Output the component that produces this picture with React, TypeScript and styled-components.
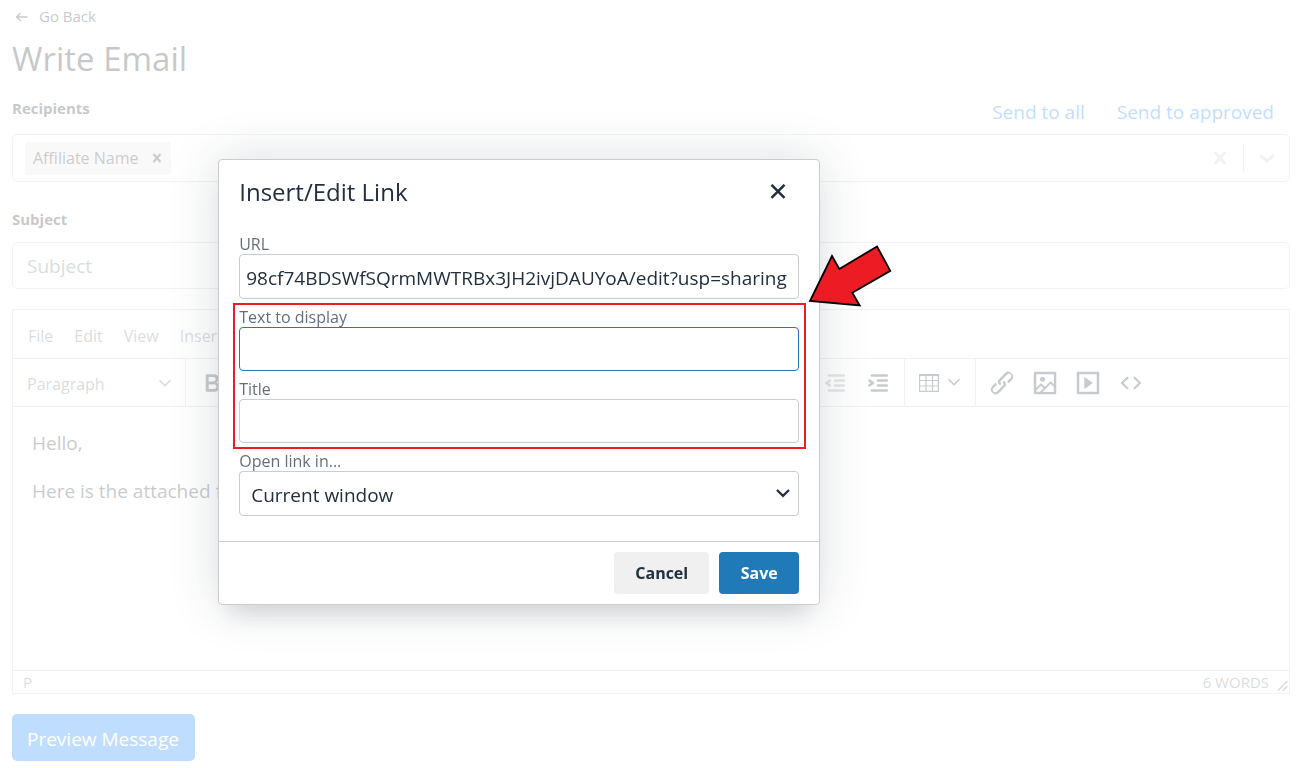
import React from "react";
import styled, { createGlobalStyle } from "styled-components";

const ink = "#222f3e";
const muted = "rgba(34, 47, 62, 0.7)";
const line = "#cccccc";
const blue = "#007bff";

const GlobalStyle = createGlobalStyle`
  *, *::before, *::after { box-sizing: border-box; }
  body {
    margin: 0;
    background: #fff;
    color: #212529;
    font-family: "Open Sans", "Noto Sans", sans-serif;
    font-size: 19px;
    line-height: 24px;
  }
  button, input, select { font: inherit; color: inherit; margin: 0; }
  button { cursor: pointer; }
`;

const Page = styled.main`
  display: flex;
  flex-direction: column;
  align-items: stretch;
  padding: 4px 8px 8px 12px;
`;

const BackLink = styled.a`
  display: flex;
  align-items: center;
  align-self: flex-start;
  gap: 10px;
  padding-left: 2px;
  color: #212529;
  font-size: 15px;
  text-decoration: none;
`;

const PageTitle = styled.h1`
  margin: 8px 0 0;
  font-size: 33px;
  line-height: 46px;
  font-weight: 400;
`;

const FieldHead = styled.div`
  display: flex;
  align-items: center;
  justify-content: space-between;
  height: 52px;
`;

const FieldLabel = styled.label`
  font-size: 15px;
  line-height: 24px;
  font-weight: 700;
`;

const SendActions = styled.div`
  display: flex;
  gap: 32px;
  padding: 8px 16px 0 0;
`;

const TextButton = styled.button`
  padding: 0;
  border: 0;
  background: none;
  color: ${blue};
`;

const Picker = styled.div`
  display: flex;
  align-items: center;
  height: 48px;
  padding-left: 12px;
  border: 1px solid ${line};
  border-radius: 5px;
`;

const Tag = styled.span`
  display: flex;
  align-items: center;
  gap: 12px;
  height: 33px;
  padding: 0 7px 0 8px;
  border-radius: 3px;
  background: #e6e6e6;
  color: #333;
  font-size: 16px;
`;

const PickerTools = styled.div`
  display: flex;
  align-items: center;
  margin-left: auto;
  color: #ccc;
`;

const PlainButton = styled.button<{ $w: number }>`
  display: flex;
  align-items: center;
  justify-content: center;
  width: ${(p) => p.$w}px;
  padding: 0;
  border: 0;
  background: none;
  color: inherit;
`;

const Rule = styled.span`
  width: 1px;
  height: 27px;
  background: ${line};
`;

const SubjectHead = styled(FieldLabel)`
  margin: 25px 0 11px;
`;

const SubjectInput = styled.input`
  height: 47px;
  padding: 0 14px;
  border: 1px solid ${line};
  border-radius: 5px;
  background: #fff;
  &::placeholder { color: #6c757d; opacity: 1; }
`;

const Editor = styled.section`
  display: flex;
  flex-direction: column;
  margin-top: 20px;
  border: 1px solid ${line};
  color: ${ink};
`;

const MenuBar = styled.nav`
  display: flex;
  gap: 1px;
  height: 49px;
  padding: 0 5px;
  border-bottom: 1px solid ${line};
`;

const MenuButton = styled.button`
  padding: 4px 10px 0;
  border: 0;
  background: none;
  color: ${muted};
  font-size: 16px;
`;

const Toolbar = styled.div`
  display: flex;
  height: 48px;
  overflow: hidden;
  border-bottom: 1px solid ${line};
`;

const ToolGroup = styled.div<{ $w?: number }>`
  display: flex;
  flex: none;
  align-items: center;
  width: ${(p) => (p.$w ? `${p.$w}px` : "auto")};
  padding: 0 5px 0 4px;
  border-right: 1px solid ${line};
  &:last-child { border-right: 0; }
`;

const ToolSpacer = styled.span`
  flex: 1;
`;

const BlockButton = styled.button`
  display: flex;
  align-items: center;
  justify-content: space-between;
  width: 100%;
  padding: 2px 8px 0 10px;
  border: 0;
  background: none;
  color: ${muted};
  font-size: 16px;
`;

const ToolButton = styled.button<{ $wide?: boolean }>`
  display: flex;
  align-items: center;
  justify-content: center;
  gap: 8px;
  width: ${(p) => (p.$wide ? 61 : 43)}px;
  height: 43px;
  padding: 0;
  border: 0;
  background: none;
  color: ${ink};
  &:disabled { color: rgba(34, 47, 62, 0.5); }
`;

const Content = styled.div`
  min-height: 263px;
  padding: 24px 19px;
  p { margin: 0 0 24px; }
`;

const StatusBar = styled.footer`
  display: flex;
  align-items: center;
  height: 23px;
  padding-left: 10px;
  border-top: 1px solid ${line};
  color: ${muted};
  font-size: 15px;
  line-height: 20px;
`;

const WordCount = styled.span`
  margin: 0 7px 0 auto;
`;

const PreviewButton = styled.button`
  align-self: flex-start;
  height: 47px;
  margin-top: 20px;
  padding: 2px 16px 0 15px;
  border: 0;
  border-radius: 5px;
  background: ${blue};
  color: #fff;
`;

const Backdrop = styled.div`
  position: fixed;
  inset: 0;
  display: flex;
  align-items: center;
  justify-content: center;
  padding: 0 20% 4px 0;
  background: rgba(255, 255, 255, 0.75);
`;

const Dialog = styled.form`
  width: 602px;
  border: 1px solid ${line};
  border-radius: 4px;
  background: #fff;
  color: ${ink};
  box-shadow: 0 20px 20px -12px rgba(34, 47, 62, 0.15), 0 0 50px 1px rgba(34, 47, 62, 0.15);
`;

const DialogHead = styled.header`
  display: flex;
  align-items: center;
  justify-content: space-between;
  height: 64px;
  padding: 0 20px;
`;

const DialogTitle = styled.h2`
  margin: 0;
  font-size: 24px;
  line-height: 32px;
  font-weight: 400;
`;

const DialogBody = styled.div`
  display: flex;
  flex-direction: column;
  gap: 8px;
  padding: 10px 20px 25px;
`;

const Highlight = styled.div`
  position: relative;
  display: flex;
  flex-direction: column;
  gap: 8px;
  &::before {
    content: "";
    position: absolute;
    inset: -4px -7px -6px -6px;
    border: 2px solid #ed1c24;
    pointer-events: none;
  }
`;

const Pointer = styled.svg`
  position: absolute;
  left: 100%;
  top: -64px;
  margin-left: 8px;
`;

const Field = styled.div`
  display: flex;
  flex-direction: column;
`;

const DialogLabel = styled.label`
  color: ${muted};
  font-size: 16px;
  line-height: 20px;
`;

const DialogInput = styled.input<{ $tall?: boolean }>`
  width: 100%;
  height: ${(p) => (p.$tall ? 45 : 44)}px;
  padding: 2px 6px 0;
  border: 1px solid ${line};
  border-radius: 4px;
  background: #fff;
  outline: none;
  &:focus { border-color: #207ab7; }
`;

const SelectWrap = styled.div`
  position: relative;
  display: flex;
  svg {
    position: absolute;
    right: 8px;
    top: 14px;
    pointer-events: none;
  }
`;

const DialogSelect = styled.select`
  appearance: none;
  width: 100%;
  height: 45px;
  padding: 2px 11px 0;
  border: 1px solid ${line};
  border-radius: 4px;
  background: #fff;
`;

const DialogFoot = styled.footer`
  display: flex;
  justify-content: flex-end;
  gap: 10px;
  padding: 10px 20px;
  border-top: 1px solid ${line};
`;

const ActionButton = styled.button<{ $primary?: boolean }>`
  min-width: 80px;
  height: 42px;
  padding: 0 21px;
  border: 0;
  border-radius: 4px;
  background: ${(p) => (p.$primary ? "#207ab7" : "#f0f0f0")};
  color: ${(p) => (p.$primary ? "#fff" : ink)};
  font-size: 16px;
  font-weight: 700;
`;

const icons = {
  bold: "M7.8 19c-.3 0-.5 0-.6-.2l-.2-.5V5.7c0-.2 0-.4.2-.5l.6-.2h5c1.5 0 2.7.3 3.5 1 .7.6 1.1 1.4 1.1 2.5a3 3 0 01-.6 1.9c-.4.6-1 1-1.6 1.2.4.1.9.3 1.3.6s.8.7 1 1.2c.4.4.5 1 .5 1.6 0 1.3-.4 2.3-1.3 3-.8.7-2.1 1-3.8 1H7.8zm5-8.3c.6 0 1.2-.1 1.6-.5.4-.3.6-.7.6-1.3 0-1.1-.8-1.7-2.3-1.7H9.3v3.5h3.4zm.5 6c.7 0 1.3-.1 1.7-.4.4-.4.6-.9.6-1.5s-.2-1-.7-1.4c-.4-.3-1-.4-2-.4H9.4v3.8h4z",
  outdent: "M7 5h12c.6 0 1 .4 1 1s-.4 1-1 1H7a1 1 0 110-2zm5 4h7c.6 0 1 .4 1 1s-.4 1-1 1h-7a1 1 0 010-2zm0 4h7c.6 0 1 .4 1 1s-.4 1-1 1h-7a1 1 0 010-2zm-5 4h12a1 1 0 010 2H7a1 1 0 010-2zm1.6-3.8a1 1 0 01-1.2 1.6l-3-2a1 1 0 010-1.6l3-2a1 1 0 011.2 1.6L6.8 12l1.8 1.2z",
  indent: "M7 5h12c.6 0 1 .4 1 1s-.4 1-1 1H7a1 1 0 110-2zm5 4h7c.6 0 1 .4 1 1s-.4 1-1 1h-7a1 1 0 010-2zm0 4h7c.6 0 1 .4 1 1s-.4 1-1 1h-7a1 1 0 010-2zm-5 4h12a1 1 0 010 2H7a1 1 0 010-2zm-2.6-3.8L6.2 12l-1.8-1.2a1 1 0 011.2-1.6l3 2a1 1 0 010 1.6l-3 2a1 1 0 11-1.2-1.6z",
  link: "M6.2 12.3a1 1 0 011.4 1.4l-2.1 2a2 2 0 102.7 2.8l4.8-4.8a1 1 0 000-1.4 1 1 0 111.4-1.3 2.9 2.9 0 010 4L9.6 20a3.9 3.9 0 01-5.5-5.5l2-2zm11.6-.6a1 1 0 01-1.4-1.4l2-2a2 2 0 10-2.6-2.8L11 10.3a1 1 0 000 1.4A1 1 0 119.6 13a2.9 2.9 0 010-4L14.4 4a3.9 3.9 0 015.5 5.5l-2 2z",
  image: "M5 15.7l3.3-3.2c.3-.3.7-.3 1 0L12 15l4.1-4c.3-.4.8-.4 1 0l2 1.9V5H5v10.7zM5 18V19h3l2.8-2.9-2-2L5 17.9zm14-3l-2.5-2.4-6.4 6.5H19v-4zM4 3h16c.6 0 1 .4 1 1v16c0 .6-.4 1-1 1H4a1 1 0 01-1-1V4c0-.6.4-1 1-1zm6 8a2 2 0 100-4 2 2 0 000 4z",
  media: "M4 3h16c.6 0 1 .4 1 1v16c0 .6-.4 1-1 1H4a1 1 0 01-1-1V4c0-.6.4-1 1-1zm1 2v14h14V5H5zm4.8 2.6l5.6 4a.5.5 0 010 .8l-5.6 4A.5.5 0 019 16V8a.5.5 0 01.8-.4z",
  code: "M9.8 15.7c.3.3.3.8 0 1-.3.4-.9.4-1.2 0l-4.4-4.1a.8.8 0 010-1.2l4.4-4.2c.3-.3.9-.3 1.2 0 .3.3.3.8 0 1.1L6 12l3.8 3.7zM14.2 15.7c-.3.3-.3.8 0 1 .4.4.9.4 1.2 0l4.4-4.1c.3-.3.3-.9 0-1.2l-4.4-4.2a.8.8 0 00-1.2 0c-.3.3-.3.8 0 1.1L18 12l-3.8 3.7z",
};

type IconName = keyof typeof icons;

const ToolIcon = ({ name }: { name: IconName }) => (
  <svg width="30" height="30" viewBox="0 0 24 24" fill="currentColor" fillRule="evenodd" aria-hidden="true">
    <path d={icons[name]} />
  </svg>
);

type StrokeProps = { w: number; h: number; d: string; stroke: number; round?: boolean };

const StrokeIcon = ({ w, h, d, stroke, round }: StrokeProps) => (
  <svg width={w} height={h} viewBox={`0 0 ${w} ${h}`} fill="none" stroke="currentColor" strokeWidth={stroke} strokeLinecap={round ? "round" : "butt"} aria-hidden="true">
    <path d={d} />
  </svg>
);

const Chevron = () => <StrokeIcon w={14} h={12} d="M1.5 2.2L7 7.7L12.5 2.2" stroke={1.6} />;

const TableIcon = () => (
  <StrokeIcon w={20} h={18} d="M.6 .6H19.4V17.4H.6ZM0 1.5H20M.6 6.5H19.4M.6 12H19.4M7 2V17.400M13.500 2V17.400" stroke={1.200} />
);

export default function App() {
  return (
    <>
      <GlobalStyle />
      <Page>
        <BackLink href="#back">
          <StrokeIcon w={15} h={10} d="M13.5 6H2.5M6.500 2L2.500 6L6.500 10" stroke={1.300} />
          Go Back
        </BackLink>
        <PageTitle>Write Email</PageTitle>

        <FieldHead>
          <FieldLabel as="span">Recipients</FieldLabel>
          <SendActions>
            <TextButton type="button">Send to all</TextButton>
            <TextButton type="button">Send to approved</TextButton>
          </SendActions>
        </FieldHead>
        <Picker>
          <Tag>
            Affiliate Name
            <PlainButton type="button" $w={14} aria-label="Remove Affiliate Name">
              <StrokeIcon w={10} h={10} d="M1.5 1L8.5 9M8.5 1L1.5 9" stroke={2} />
            </PlainButton>
          </Tag>
          <PickerTools>
            <PlainButton type="button" $w={46} aria-label="Clear recipients">
              <StrokeIcon w={14} h={14} d="M2.5 2L11.5 12M11.5 2L2.5 12" stroke={3} round />
            </PlainButton>
            <Rule />
            <PlainButton type="button" $w={45} aria-label="Show recipients">
              <StrokeIcon w={16} h={10} d="M2 3L8 8L14 3" stroke={3} round />
            </PlainButton>
          </PickerTools>
        </Picker>

        <SubjectHead htmlFor="subject">Subject</SubjectHead>
        <SubjectInput id="subject" type="text" placeholder="Subject" />

        <Editor aria-label="Message">
          <MenuBar>
            {["File", "Edit", "View", "Insert"].map((item) => (
              <MenuButton type="button" key={item}>{item}</MenuButton>
            ))}
          </MenuBar>
          <Toolbar>
            <ToolGroup $w={173}>
              <BlockButton type="button">
                Paragraph
                <Chevron />
              </BlockButton>
            </ToolGroup>
            <ToolGroup $w={719}>
              <ToolButton type="button" aria-label="Bold"><ToolIcon name="bold" /></ToolButton>
              <ToolSpacer />
              <ToolButton type="button" disabled aria-label="Decrease indent"><ToolIcon name="outdent" /></ToolButton>
              <ToolButton type="button" aria-label="Increase indent"><ToolIcon name="indent" /></ToolButton>
            </ToolGroup>
            <ToolGroup>
              <ToolButton type="button" $wide aria-label="Table">
                <TableIcon />
                <Chevron />
              </ToolButton>
            </ToolGroup>
            <ToolGroup>
              <ToolButton type="button" aria-label="Link"><ToolIcon name="link" /></ToolButton>
              <ToolButton type="button" aria-label="Image"><ToolIcon name="image" /></ToolButton>
              <ToolButton type="button" aria-label="Media"><ToolIcon name="media" /></ToolButton>
              <ToolButton type="button" aria-label="Source code"><ToolIcon name="code" /></ToolButton>
            </ToolGroup>
          </Toolbar>
          <Content>
            <p>Hello,</p>
            <p>Here is the attached file</p>
          </Content>
          <StatusBar>
            <span>P</span>
            <WordCount>6 WORDS</WordCount>
            <StrokeIcon w={13} h={20} d="M2 18.500L11.500 9M7 18.500L11.500 14" stroke={1.500} />
          </StatusBar>
        </Editor>

        <PreviewButton type="button">Preview Message</PreviewButton>
      </Page>

      <Backdrop>
        <Dialog role="dialog" aria-labelledby="dialog-title" onSubmit={(e) => e.preventDefault()}>
          <DialogHead>
            <DialogTitle id="dialog-title">Insert/Edit Link</DialogTitle>
            <PlainButton type="button" $w={42} aria-label="Close">
              <StrokeIcon w={16} h={16} d="M1.5 .8L14.500 13.800M14.500 .8L1.500 13.800" stroke={2.500} />
            </PlainButton>
          </DialogHead>
          <DialogBody>
            <Field>
              <DialogLabel htmlFor="url">URL</DialogLabel>
              <DialogInput id="url" type="text" $tall defaultValue="98cf74BDSWfSQrmMWTRBx3JH2ivjDAUYoA/edit?usp=sharing" />
            </Field>
            <Highlight>
              <Field>
                <DialogLabel htmlFor="display">Text to display</DialogLabel>
                <DialogInput id="display" type="text" autoFocus />
              </Field>
              <Field>
                <DialogLabel htmlFor="title">Title</DialogLabel>
                <DialogInput id="title" type="text" />
              </Field>
              <Pointer width="88" height="66" viewBox="0 0 88 66" aria-hidden="true">
                <path d="M3 58L25 13L32.3 26L70 3.5L83.3 27.8L45.3 49.8L52.7 62.5Z" fill="#ed1c24" stroke="#000" strokeWidth="1.8" />
              </Pointer>
            </Highlight>
            <Field>
              <DialogLabel htmlFor="target">Open link in...</DialogLabel>
              <SelectWrap>
                <DialogSelect id="target" defaultValue="current">
                  <option value="current">Current window</option>
                </DialogSelect>
                <StrokeIcon w={16} h={16} d="M2 5L8 10.8L14 5" stroke={2.3} />
              </SelectWrap>
            </Field>
          </DialogBody>
          <DialogFoot>
            <ActionButton type="button">Cancel</ActionButton>
            <ActionButton type="submit" $primary>Save</ActionButton>
          </DialogFoot>
        </Dialog>
      </Backdrop>
    </>
  );
}
